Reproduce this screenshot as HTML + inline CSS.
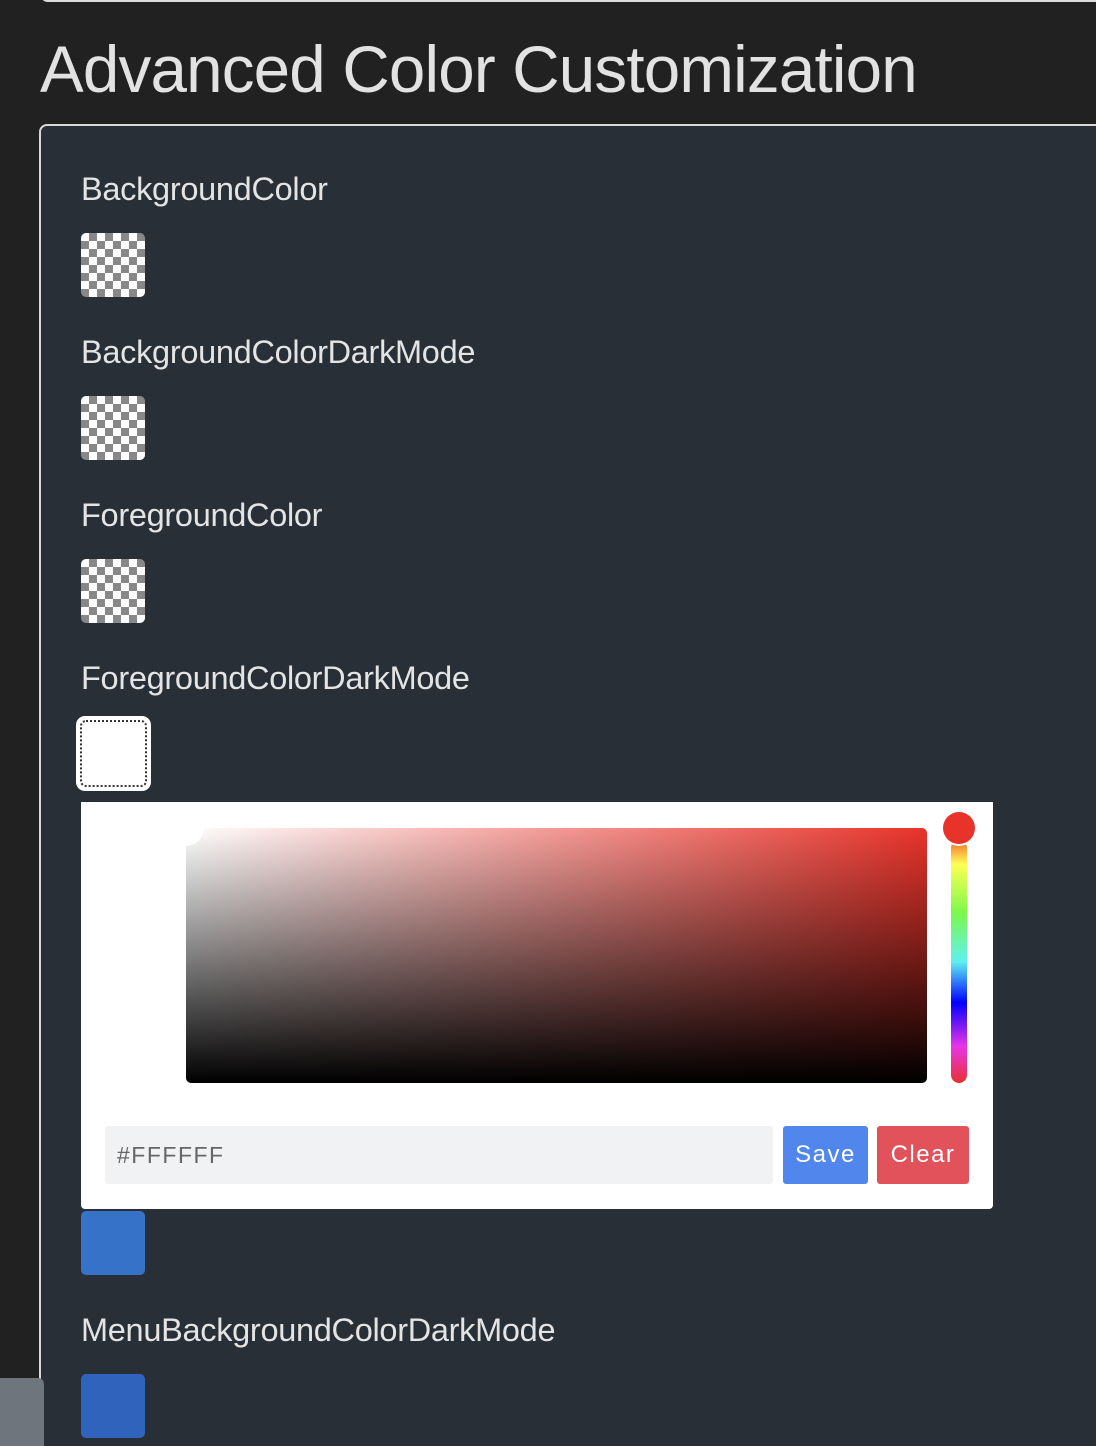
<!DOCTYPE html>
<html style="height:1446px;overflow:hidden"><head><style>
body{margin:0;width:1096px;height:1446px;background:#212121;overflow:hidden;position:relative;font-family:"Liberation Sans",sans-serif}
.topline{position:absolute;left:40px;top:-20px;width:1100px;height:22px;border:2px solid #ddd;border-radius:8px;box-sizing:border-box}
h1{position:absolute;left:40px;top:28px;margin:0;font-size:65.5px;font-weight:normal;color:#e2e2e2;letter-spacing:-0.8px;line-height:84px;white-space:nowrap}
.panel{position:absolute;left:39px;top:124px;width:1100px;height:1322px;background:#282f37;border:2px solid #d8d8d8;border-bottom:none;border-radius:8px 8px 0 0;box-sizing:border-box}
.lbl{position:absolute;left:81px;font-size:32.5px;color:#e4e4e4;white-space:nowrap;letter-spacing:-0.3px}
.sw{position:absolute;left:81px;width:64px;height:64px;border-radius:5px}
.chk{background-color:#fff;background-image:linear-gradient(45deg,#888 25%,transparent 25%,transparent 75%,#888 75%),linear-gradient(45deg,#888 25%,transparent 25%,transparent 75%,#888 75%);background-size:16px 16px;background-position:0 0,8px 8px}
.gray{position:absolute;left:0;top:1378px;width:44px;height:68px;background:#6f757c;border-radius:0 6px 0 0}
</style></head><body>
<div class="topline"></div>
<h1>Advanced Color Customization</h1>
<div class="panel"></div>
<div class="lbl" style="top:171px">BackgroundColor</div>
<div class="sw chk" style="top:233px"></div>
<div class="lbl" style="top:334px">BackgroundColorDarkMode</div>
<div class="sw chk" style="top:396px"></div>
<div class="lbl" style="top:497px">ForegroundColor</div>
<div class="sw chk" style="top:559px"></div>
<div class="lbl" style="top:660px">ForegroundColorDarkMode</div>
<div style="position:absolute;left:76px;top:716px;width:75px;height:75px;background:#fff;border-radius:9px"></div>
<div style="position:absolute;left:80px;top:720px;width:67px;height:67px;border:2px dotted #333;border-radius:6px;box-sizing:border-box"></div>
<div style="position:absolute;left:81px;top:802px;width:912px;height:407px;background:#fff;border-radius:0 0 4px 4px"></div>
<div style="position:absolute;left:186px;top:828px;width:741px;height:255px;border-radius:5px;background:linear-gradient(to top,#000,rgba(0,0,0,0)),linear-gradient(to right,#fff,#e8332a)"></div>
<div style="position:absolute;left:168px;top:810px;width:36px;height:36px;border-radius:50%;background:#fff"></div>
<div style="position:absolute;left:951px;top:840px;width:16px;height:243px;border-radius:8px;background:linear-gradient(#f06a2a,#ffff55 10%,#7cf84a 30%,#60f0f0 50%,#0000ff 67%,#e835e8 85%,#e8302f)"></div>
<div style="position:absolute;left:943px;top:812px;width:32px;height:32px;border-radius:50%;background:#e8332a;box-shadow:0 0 0 2px #fff"></div>
<div style="position:absolute;left:105px;top:1126px;width:668px;height:58px;background:#f1f2f4;border-radius:3px;font-size:23px;color:#666;line-height:58px;padding-left:12px;box-sizing:border-box;letter-spacing:1.5px">#FFFFFF</div>
<div style="position:absolute;left:783px;top:1126px;width:85px;height:58px;background:#5186ec;border-radius:3px;color:#fff;font-size:24px;line-height:58px;text-align:center;letter-spacing:1.5px">Save</div>
<div style="position:absolute;left:877px;top:1126px;width:92px;height:58px;background:#e2525a;border-radius:3px;color:#fff;font-size:24px;line-height:58px;text-align:center;letter-spacing:1.5px">Clear</div>
<div class="sw" style="top:1211px;background:#3672c8"></div>
<div class="lbl" style="top:1312px">MenuBackgroundColorDarkMode</div>
<div class="sw" style="top:1374px;background:#3064bc"></div>
<div class="gray"></div>
</body></html>
